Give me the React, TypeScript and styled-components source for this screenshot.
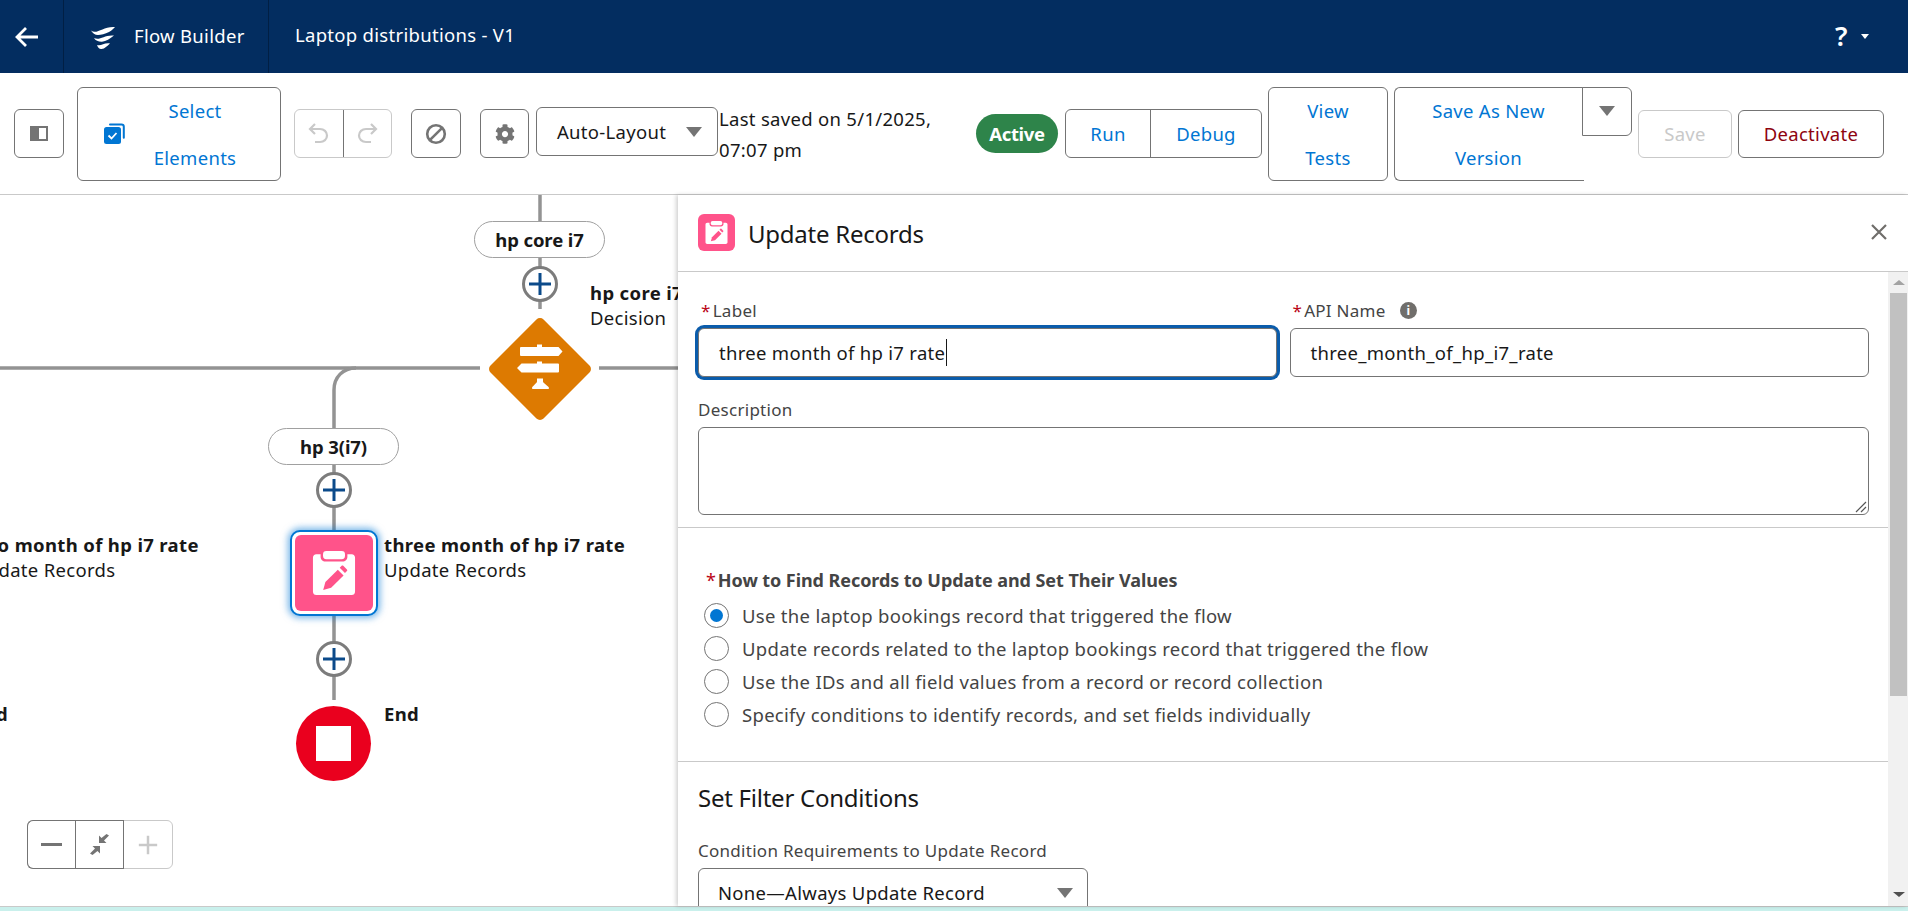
import React from "react";
import styled, { createGlobalStyle } from "styled-components";
import { FaCog } from "react-icons/fa";

const Global = createGlobalStyle`
  html, body { margin: 0; padding: 0; background: #fff; }
  body { font-family: "Noto Sans", "Open Sans", sans-serif; font-size: 18.5px; letter-spacing: 0.3px; color: #181818; }
  * { box-sizing: border-box; }
`;

const Page = styled.div`
  width: 1908px; height: 911px; display: flex; flex-direction: column; overflow: hidden;
`;

/* Header */
const Header = styled.header`
  height: 73px; flex: none; background: #032d60; color: #fff; display: flex; align-items: center;
`;
const HeaderCell = styled.div<{ $w: number }>`
  width: ${p => p.$w}px; height: 100%; display: flex; align-items: center; gap: 19px;
  padding-left: ${p => (p.$w < 100 ? 15 : 27)}px; border-right: 1px solid #011f44; flex: none;
`;
const DocTitle = styled.div`
  padding-left: 26px; flex: 1; line-height: 1; margin-top: -2px;
`;
const BrandText = styled.span`
  margin-top: -2px;
`;
const HelpArea = styled.div`
  display: flex; align-items: center; gap: 12px; padding-right: 39px;
`;
const HelpMark = styled.span`
  font-size: 27px; font-weight: 600; line-height: 1; width: 14px; letter-spacing: 0; margin-top: -2px;
`;
const HelpCaret = styled.span`
  width: 0; height: 0; border-left: 4.5px solid transparent; border-right: 4.5px solid transparent; border-top: 5px solid #fff;
`;

/* Toolbar */
const Toolbar = styled.div`
  height: 122px; flex: none; background: #fff; border-bottom: 1px solid #c9c9c9;
  display: flex; align-items: center; padding-left: 14px;
`;
const Btn = styled.div<{ $w: number; $h?: number; $ml?: number; $color?: string; $line?: string; $lh?: number }>`
  width: ${p => p.$w}px; height: ${p => p.$h ?? 49}px; margin-left: ${p => p.$ml ?? 0}px; flex: none;
  border: 1px solid ${p => p.$line ?? "#747474"}; border-radius: 6px; background: #fff;
  color: ${p => p.$color ?? "#0176d3"}; display: flex; align-items: center; justify-content: center;
  text-align: center; line-height: ${p => p.$lh ?? 24}px;
`;
const StackLabel = styled.div<{ $w: number }>`
  width: ${p => p.$w}px; line-height: 47px; text-align: center; padding-top: 1px;
`;
const SelectBtn = styled(Btn)`
  justify-content: flex-start; padding-left: 26px; gap: 20px;
`;
const BtnGroup = styled.div<{ $w: number; $ml: number; $line?: string; $h?: number }>`
  width: ${p => p.$w}px; height: ${p => p.$h ?? 49}px; margin-left: ${p => p.$ml}px; flex: none; display: flex;
  border: 1px solid ${p => p.$line ?? "#747474"}; border-radius: 6px; overflow: hidden; background: #fff;
`;
const GroupCell = styled.div<{ $w?: number; $line?: string; $color?: string }>`
  ${p => (p.$w ? `width:${p.$w}px;flex:none;` : "flex:1;")}
  display: flex; align-items: center; justify-content: center; color: ${p => p.$color ?? "#0176d3"};
  & + & { border-left: 1px solid ${p => p.$line ?? "#747474"}; }
`;
const ModeSelect = styled.div`
  width: 182px; height: 49px; margin: -4px 0 0 7px; flex: none; border: 1px solid #747474; border-radius: 6px;
  display: flex; align-items: center; justify-content: space-between; padding: 0 15px 0 20px;
`;
const Caret = styled.span<{ $w?: number; $h?: number }>`
  width: 0; height: 0; flex: none;
  border-left: ${p => (p.$w ?? 17) / 2}px solid transparent; border-right: ${p => (p.$w ?? 17) / 2}px solid transparent;
  border-top: ${p => p.$h ?? 10}px solid #747474;
`;
const SavedText = styled.div`
  width: 257px; margin: 1px 0 0 1px; flex: none; line-height: 31px;
`;
const ActivePill = styled.div`
  width: 82px; height: 39px; flex: none; border-radius: 20px; background: #2e844a; color: #fff; font-weight: 700;
  letter-spacing: -0.3px; display: flex; align-items: center; justify-content: center;
`;
const Split = styled.div`
  margin-left: 6px; display: flex; align-items: flex-start; flex: none; height: 94px;
`;
const SplitMain = styled.div`
  width: 190px; height: 94px; border: 1px solid #747474; border-right: none; border-radius: 6px 0 0 6px;
  color: #0176d3; text-align: center; padding-right: 2px;
`;
const SplitLabel = styled.div`
  line-height: 47px; margin-top: -1px;
`;
const SplitMore = styled.div`
  width: 50px; height: 49px; margin-left: -2px; border: 1px solid #747474; border-radius: 0 6px 6px 0; background: #fff;
  display: flex; align-items: center; justify-content: center;
`;

/* Main */
const Main = styled.div`
  flex: 1; min-height: 0; display: flex;
`;
const Canvas = styled.div`
  width: 678px; flex: none; position: relative; overflow: hidden; background: #fff;
`;
const Wires = styled.svg`
  position: absolute; inset: 0; width: 678px; height: 711px;
`;
const BranchPill = styled.div<{ $x: number; $y: number }>`
  position: absolute; left: ${p => p.$x}px; top: ${p => p.$y}px; width: 131px; height: 37px;
  border: 1px solid #a0a0a0; border-radius: 19px; background: #fff; font-weight: 700; letter-spacing: -0.1px;
  display: flex; align-items: center; justify-content: center;
`;
const AddNode = styled.div<{ $x: number; $y: number }>`
  position: absolute; left: ${p => p.$x - 18}px; top: ${p => p.$y - 18}px; width: 36px; height: 36px;
  border: 3px solid #7c7c7c; border-radius: 50%; background: #fff; display: flex; align-items: center; justify-content: center;
`;
const NodeLabel = styled.div<{ $x: number; $y: number }>`
  position: absolute; left: ${p => p.$x}px; top: ${p => p.$y}px; line-height: 25px; white-space: nowrap;
`;
const NodeName = styled.div`
  font-weight: 700; letter-spacing: 0.35px;
`;
const DiamondIcon = styled.svg`
  position: absolute; left: 490px; top: 124px; width: 100px; height: 100px; overflow: visible;
`;
const SelectedNode = styled.div`
  position: absolute; left: 290px; top: 335px; width: 88px; height: 86px; border: 2px solid #0176d3; border-radius: 10px;
  background: #fff; padding: 3px; box-shadow: 0 0 7px 2px rgba(1, 118, 211, 0.55);
`;
const NodeFace = styled.div`
  width: 100%; height: 100%; background: #ff538a; border-radius: 6px; display: flex; align-items: center; justify-content: center;
`;
const EndNode = styled.div`
  position: absolute; left: 296px; top: 511px; width: 75px; height: 75px; border-radius: 50%; background: #ea001e;
  display: flex; align-items: center; justify-content: center;
`;
const EndSquare = styled.div`
  width: 35px; height: 35px; background: #fff;
`;
const ZoomBar = styled.div`
  position: absolute; left: 27px; top: 625px; width: 146px; height: 49px; display: flex;
  border: 1px solid #c9c9c9; border-radius: 6px; background: #fff;
`;
const ZoomCell = styled.div<{ $active?: boolean; $first?: boolean }>`
  flex: 1; display: flex; align-items: center; justify-content: center;
  ${p => (p.$active ? "border: 1px solid #747474; margin: -1px 0 -1px -1px;" : "")}
  ${p => (p.$first ? "border-right: none; border-radius: 6px 0 0 6px;" : "")}
`;

/* Panel */
const Panel = styled.aside`
  flex: 1; min-width: 0; display: flex; flex-direction: column; background: #fff; position: relative;
  box-shadow: -2px 0 4px rgba(0, 0, 0, 0.18);
`;
const PanelHeader = styled.div`
  height: 77px; flex: none; border-bottom: 1px solid #c9c9c9; display: flex; align-items: center; padding: 0 21px 2px 20px;
`;
const PanelIcon = styled.div`
  width: 37px; height: 37px; border-radius: 6px; background: #ff538a; display: flex; align-items: center; justify-content: center; flex: none;
`;
const PanelTitle = styled.h2`
  font-size: 24px; font-weight: 400; letter-spacing: -0.25px; margin: 3px 0 0 13px; flex: 1; line-height: 32px;
`;
const PanelBody = styled.div`
  flex: 1; min-height: 0; display: flex;
`;
const PanelScroll = styled.div`
  flex: 1; min-width: 0; overflow: hidden;
`;
const Section = styled.section`
  border-bottom: 1px solid #c9c9c9; padding: 28px 19px 12px 20px;
`;
const FieldRow = styled.div`
  display: grid; grid-template-columns: 1fr 1fr; column-gap: 12px;
`;
const FieldLabel = styled.div`
  display: flex; align-items: center; height: 24px; margin-bottom: 4px; padding-bottom: 4px; color: #444; white-space: nowrap;
  font-size: 17px; letter-spacing: 0.28px;
`;
const Req = styled.span`
  color: #ba0517; margin: 0 2px 0 3px; font-weight: 400;
`;
const InfoDot = styled.span`
  width: 17px; height: 17px; border-radius: 50%; background: #706e6b; color: #fff; font-size: 12px; font-weight: 700;
  display: inline-flex; align-items: center; justify-content: center; margin-left: 14px; letter-spacing: 0;
`;
const Input = styled.div<{ $focus?: boolean }>`
  height: 49px; border: 1px solid #747474; border-radius: 6px; display: flex; align-items: center; padding-left: 20px; background: #fff;
  ${p => (p.$focus ? "box-shadow: 0 0 0 3px #0b5cab; margin: 1px 1px 0 0;" : "")}
`;
const TextCaret = styled.span`
  width: 1px; height: 27px; background: #181818; margin-left: 1px;
`;
const TextArea = styled.div`
  height: 88px; border: 1px solid #747474; border-radius: 6px; position: relative;
`;
const ResizeGrip = styled.svg`
  position: absolute; right: 1px; bottom: 1px; width: 12px; height: 12px;
`;
const DescLabel = styled(FieldLabel)`
  margin-top: 22px;
`;
const RadioSection = styled.section`
  border-bottom: 1px solid #c9c9c9; padding: 41px 19px 30px 26px;
`;
const RadioHeading = styled.div`
  height: 24px; line-height: 22px; font-size: 18px; font-weight: 700; letter-spacing: -0.07px; color: #444; margin: 0 0 6px -1px;
`;
const RadioRow = styled.div`
  height: 33px; display: flex; align-items: center; color: #444; gap: 13px;
`;
const RadioDot = styled.span<{ $on?: boolean }>`
  width: 25px; height: 25px; border: 1px solid #747474; border-radius: 50%; flex: none; display: flex; align-items: center; justify-content: center;
  &::after { content: ""; width: 13px; height: 13px; border-radius: 50%; background: ${p => (p.$on ? "#0176d3" : "transparent")}; }
`;
const FilterSection = styled.section`
  padding: 20px 19px 0 20px;
`;
const FilterTitle = styled.h3`
  font-size: 24px; font-weight: 400; letter-spacing: -0.25px; line-height: 32px; margin: 0 0 26px;
`;
const FilterSelect = styled.div`
  width: 390px; height: 49px; border: 1px solid #747474; border-radius: 6px; display: flex; align-items: center;
  justify-content: space-between; padding: 0 14px 0 19px;
`;
const ScrollTrack = styled.div`
  width: 20px; flex: none; background: #f1f1f1; display: flex; flex-direction: column; align-items: center; padding: 0 0 0 1px;
`;
const ArrowSlot = styled.div<{ $h: number }>`
  height: ${p => p.$h}px; flex: none; display: flex; align-items: center; justify-content: center;
`;
const ScrollArrowUp = styled.span`
  width: 0; height: 0; border-left: 6px solid transparent; border-right: 6px solid transparent; border-bottom: 5px solid #a3a3a3;
`;
const ScrollArrowDown = styled.span`
  width: 0; height: 0; border-left: 6px solid transparent; border-right: 6px solid transparent; border-top: 5px solid #505050;
`;
const ScrollThumb = styled.div`
  width: 17px; height: 403px; flex: none; background: #c1c1c1;
`;
const ScrollFill = styled.div`
  flex: 1;
`;
const BottomStrip = styled.div`
  height: 5px; flex: none; background: #c9f0ec; border-top: 1px solid #c9c9c9;
`;

const ClipPencil: React.FC<{ size: number; bg: string }> = ({ size, bg }) => (
  <svg width={size} height={size} viewBox="0 0 44 46" fill="none">
    <path fill="#fff" d="M3.500 3.500h4.500v2.500c0 2.800 2.200 5 5 5h18c2.800 0 5-2.200 5-5V3.500h4.500c2 0 3.500 1.500 3.500 3.500v35.500c0 2-1.500 3.500-3.500 3.500H3.500C1.500 46 0 44.500 0 42.500V7c0-2 1.500-3.500 3.500-3.500z" />
    <rect x="10.500" y="0" width="23" height="8.500" rx="3.500" fill="#fff" />
    <path fill={bg} d="M10.700 40.700L13 32.500 26 19.500l6 6-13 13z" />
    <path fill={bg} d="M28 17.500l2-2c.5-.5 1.200-.5 1.700 0l3.800 3.800c.5.500.5 1.200 0 1.700l-2 2z" />
  </svg>
);

const PlusMark: React.FC<{ color?: string; size?: number; w?: number }> = ({ color = "#0b4a8a", size = 24, w = 3 }) => (
  <svg width={size} height={size} viewBox="0 0 24 24" fill="none">
    <path d="M12 1v22M1 12h22" stroke={color} strokeWidth={w} />
  </svg>
);

const radios = [
  "Use the laptop bookings record that triggered the flow",
  "Update records related to the laptop bookings record that triggered the flow",
  "Use the IDs and all field values from a record or record collection",
  "Specify conditions to identify records, and set fields individually",
];

export default function App() {
  return (
    <Page>
      <Global />
      <Header>
        <HeaderCell $w={64}>
          <svg width="24" height="22" viewBox="0 0 24 22" fill="none">
            <path d="M1.500 11H23M11 2l-9 9 9 9" stroke="#fff" strokeWidth="2.800" />
          </svg>
        </HeaderCell>
        <HeaderCell $w={205}>
          <svg width="24" height="24" viewBox="0 0 24 24" fill="none">
            <path d="M0 5.500C6 10 12 1 24 2c-1 1-3 3.500-6 5-4 2-8 3-11 3-3 0-5.500-2-7-4.500z" fill="#fff" />
            <path d="M3 13c6 3 10-3.500 20-2.500-4 3-8 6-12 6.200-3.500.1-6.500-1-8-3.700z" fill="#fff" />
            <path d="M6 20c4 1.500 7-2.500 13-1.500-3 2.500-5 5.300-8.500 5.500-2 .1-3.500-1-4.500-4z" fill="#fff" />
          </svg>
          <BrandText>Flow Builder</BrandText>
        </HeaderCell>
        <DocTitle>Laptop distributions - V1</DocTitle>
        <HelpArea>
          <HelpMark>?</HelpMark>
          <HelpCaret />
        </HelpArea>
      </Header>

      <Toolbar>
        <Btn $w={50}>
          <svg width="18" height="15" viewBox="0 0 18 15">
            <rect x="1" y="1" width="16" height="13" fill="#fff" stroke="#747474" strokeWidth="2" />
            <rect x="1" y="1" width="8" height="13" fill="#747474" />
          </svg>
        </Btn>
        <SelectBtn $w={204} $h={94} $ml={13}>
          <svg width="21" height="21" viewBox="0 0 21 21" fill="none">
            <path d="M6 1.500h11.500c1.300 0 2.300 1 2.300 2.300v11" stroke="#0176d3" strokeWidth="2" strokeLinecap="round" />
            <rect x="0" y="4" width="17" height="17" rx="2.500" fill="#0176d3" />
            <path d="M4.500 12.500l3 3 5-5.500" stroke="#fff" strokeWidth="1.800" />
          </svg>
          <StackLabel $w={100}>Select Elements</StackLabel>
        </SelectBtn>
        <BtnGroup $w={98} $ml={13} $line="#c9c9c9">
          <GroupCell $line="#c9c9c9">
            <svg width="21" height="21" viewBox="0 0 21 21" fill="none">
              <path d="M7 1L2 6l5 5M2.500 6H12c4 0 7 2.800 7 6.500S16 19 12 19H7" stroke="#c9c9c9" strokeWidth="2.200" />
            </svg>
          </GroupCell>
          <GroupCell $line="#c9c9c9">
            <svg width="21" height="21" viewBox="0 0 21 21" fill="none">
              <path d="M14 1l5 5-5 5M18.500 6H9C5 6 2 8.800 2 12.500S5 19 9 19h5" stroke="#c9c9c9" strokeWidth="2.200" />
            </svg>
          </GroupCell>
        </BtnGroup>
        <Btn $w={50} $ml={19}>
          <svg width="22" height="22" viewBox="0 0 22 22" fill="none">
            <circle cx="11" cy="11" r="8.800" stroke="#747474" strokeWidth="2.600" />
            <path d="M4.800 17.200L17.200 4.800" stroke="#747474" strokeWidth="2.600" />
          </svg>
        </Btn>
        <Btn $w={49} $ml={19}><FaCog size={20} color="#747474" /></Btn>
        <ModeSelect>
          Auto-Layout
          <Caret />
        </ModeSelect>
        <SavedText>Last saved on 5/1/2025,<br />07:07 pm</SavedText>
        <ActivePill>Active</ActivePill>
        <BtnGroup $w={197} $ml={7}>
          <GroupCell $w={84}>Run</GroupCell>
          <GroupCell>Debug</GroupCell>
        </BtnGroup>
        <Btn $w={120} $h={94} $ml={6}><StackLabel $w={60}>View Tests</StackLabel></Btn>
        <Split>
          <SplitMain><SplitLabel>Save As New<br />Version</SplitLabel></SplitMain>
          <SplitMore><Caret /></SplitMore>
        </Split>
        <Btn $w={94} $h={48} $ml={6} $color="#c9c9c9" $line="#c9c9c9">Save</Btn>
        <Btn $w={146} $h={48} $ml={6} $color="#8e030f">Deactivate</Btn>
      </Toolbar>

      <Main>
        <Canvas>
          <Wires viewBox="0 0 678 711" fill="none">
            <g stroke="#939393" strokeWidth="3.500">
              <path d="M540 0V114" />
              <path d="M0 173H480" />
              <path d="M599 173H678" />
              <path d="M356 173c-13 0-22 9-22 22V505" />
            </g>
          </Wires>
          <BranchPill $x={474} $y={26}>hp core i7</BranchPill>
          <AddNode $x={540} $y={89}><PlusMark /></AddNode>
          <DiamondIcon viewBox="0 0 100 100">
            <rect x="12.500" y="12.500" width="75" height="75" rx="5" fill="#dd7a01" transform="rotate(45 50 50)" />
            <path fill="#fff" d="M47 28v-2.500h5V28h16.500l4 4.500-4 4.500H31a1 1 0 0 1-1-1v-7a1 1 0 0 1 1-1z" />
            <path fill="#fff" d="M47 44.500V42.500h5v2H68a1 1 0 0 1 1 1v7a1 1 0 0 1-1 1H31.500l-4.500-4.500 4.500-4.500z" />
            <path fill="#fff" d="M47 59.500h6v3c0 1.500 6 5 6 6.500 0 .7-.5 1-1 1H43c-.5 0-1-.3-1-1 0-1.500 5-5 5-6.500z" />
          </DiamondIcon>
          <NodeLabel $x={590} $y={85}>
            <NodeName>hp core i7</NodeName>
            Decision
          </NodeLabel>
          <BranchPill $x={268} $y={233}>hp 3(i7)</BranchPill>
          <AddNode $x={334} $y={295}><PlusMark /></AddNode>
          <SelectedNode>
            <NodeFace><ClipPencil size={44} bg="#ff538a" /></NodeFace>
          </SelectedNode>
          <NodeLabel $x={384} $y={337}>
            <NodeName>three month of hp i7 rate</NodeName>
            Update Records
          </NodeLabel>
          <NodeLabel $x={-27} $y={337}>
            <NodeName>two month of hp i7 rate</NodeName>
            Update Records
          </NodeLabel>
          <AddNode $x={334} $y={464}><PlusMark /></AddNode>
          <EndNode><EndSquare /></EndNode>
          <NodeLabel $x={384} $y={506}><NodeName>End</NodeName></NodeLabel>
          <NodeLabel $x={-27} $y={506}><NodeName>End</NodeName></NodeLabel>
          <ZoomBar>
            <ZoomCell $active $first>
              <svg width="21" height="3" viewBox="0 0 21 3"><rect width="21" height="3" fill="#747474" /></svg>
            </ZoomCell>
            <ZoomCell $active>
              <svg width="21" height="21" viewBox="0 0 21 21" fill="#747474">
                <path d="M20 1.500l-5 5 2.500 2.500h-7.500V1.500l2.500 2.500 5-4z" />
                <path d="M1 19.500l5-5-2.500-2.500H11v7.500L8.500 17l-5 4z" />
              </svg>
            </ZoomCell>
            <ZoomCell><PlusMark color="#c9c9c9" size={20} /></ZoomCell>
          </ZoomBar>
        </Canvas>

        <Panel>
          <PanelHeader>
            <PanelIcon><ClipPencil size={23} bg="#ff538a" /></PanelIcon>
            <PanelTitle>Update Records</PanelTitle>
            <svg width="16" height="16" viewBox="0 0 16 16" fill="none">
              <path d="M1 1l14 14M15 1L1 15" stroke="#706e6b" strokeWidth="2.200" />
            </svg>
          </PanelHeader>
          <PanelBody>
            <PanelScroll>
              <Section>
                <FieldRow>
                  <div>
                    <FieldLabel><Req>*</Req>Label</FieldLabel>
                    <Input $focus>three month of hp i7 rate<TextCaret /></Input>
                  </div>
                  <div>
                    <FieldLabel><Req>*</Req>API Name<InfoDot>i</InfoDot></FieldLabel>
                    <Input>three_month_of_hp_i7_rate</Input>
                  </div>
                </FieldRow>
                <DescLabel>Description</DescLabel>
                <TextArea>
                  <ResizeGrip viewBox="0 0 12 12" fill="none">
                    <path d="M1 11L11 1M6 11l5-5" stroke="#555" strokeWidth="1.200" />
                  </ResizeGrip>
                </TextArea>
              </Section>
              <RadioSection>
                <RadioHeading><Req>*</Req>How to Find Records to Update and Set Their Values</RadioHeading>
                {radios.map((r, i) => (
                  <RadioRow key={r}>
                    <RadioDot $on={i === 0} />
                    {r}
                  </RadioRow>
                ))}
              </RadioSection>
              <FilterSection>
                <FilterTitle>Set Filter Conditions</FilterTitle>
                <FieldLabel>Condition Requirements to Update Record</FieldLabel>
                <FilterSelect>
                  None—Always Update Record
                  <Caret />
                </FilterSelect>
              </FilterSection>
            </PanelScroll>
            <ScrollTrack>
              <ArrowSlot $h={21}><ScrollArrowUp /></ArrowSlot>
              <ScrollThumb />
              <ScrollFill />
              <ArrowSlot $h={24}><ScrollArrowDown /></ArrowSlot>
            </ScrollTrack>
          </PanelBody>
        </Panel>
      </Main>
      <BottomStrip />
    </Page>
  );
}
